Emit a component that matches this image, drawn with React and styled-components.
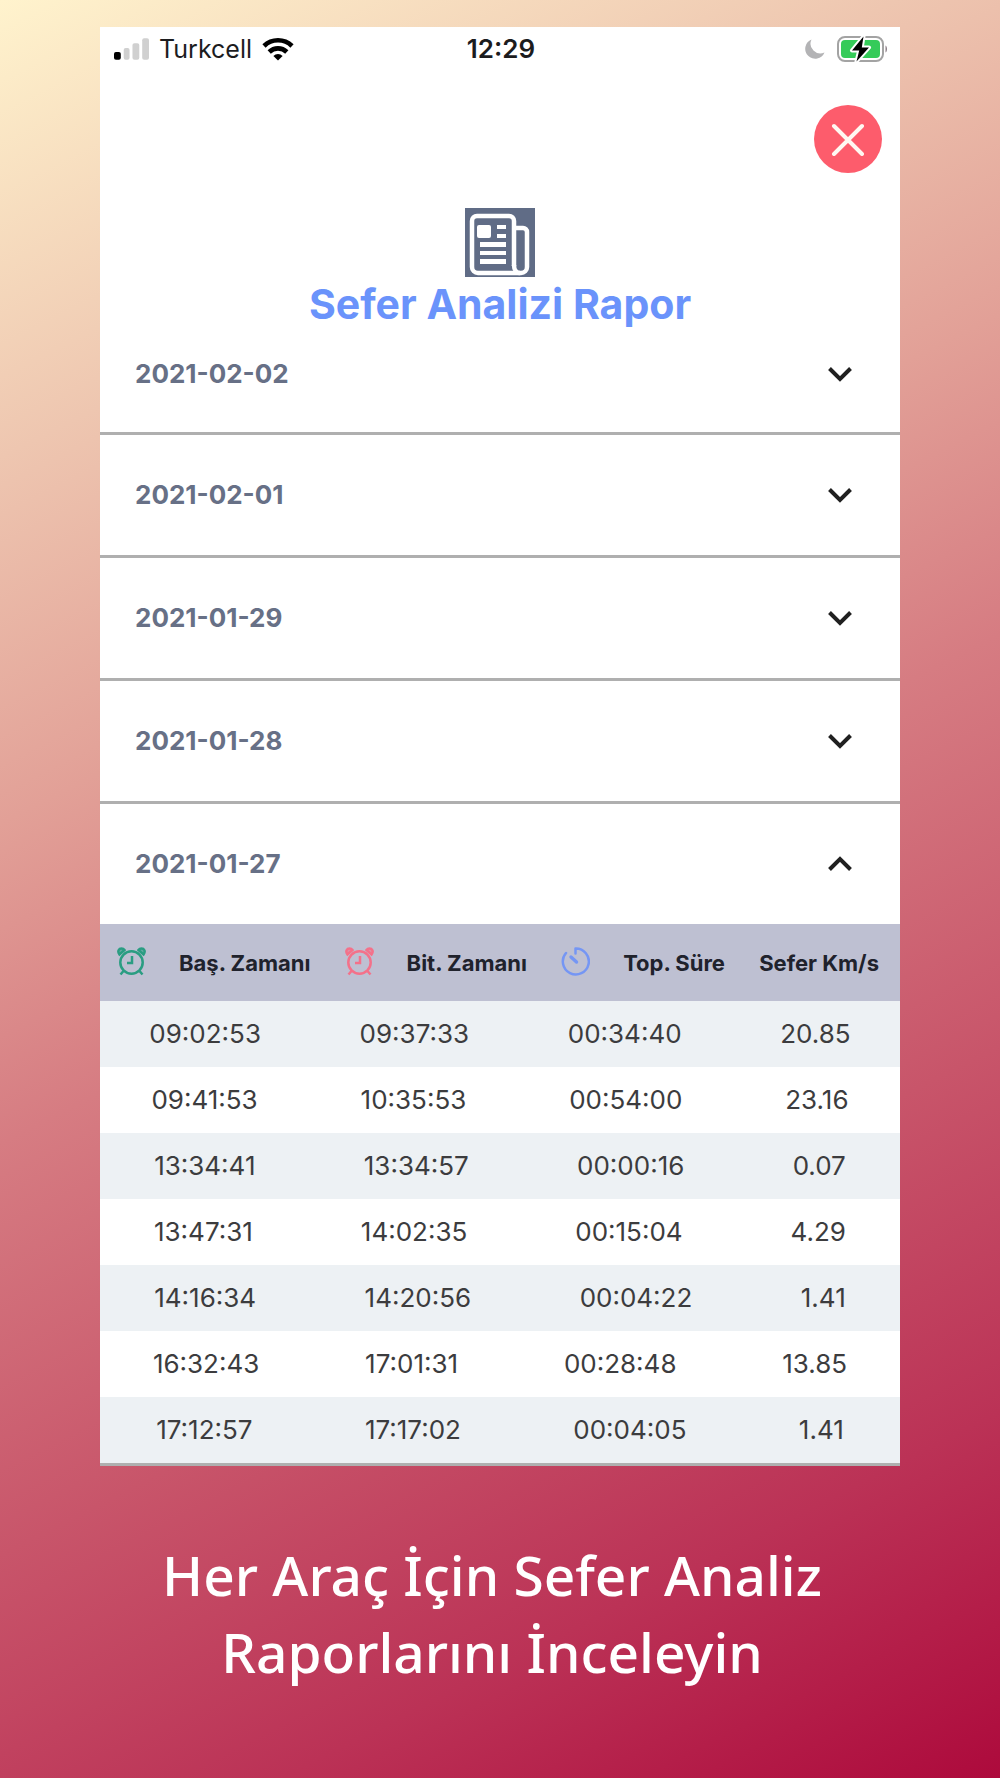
import React, { useState } from "react";
import styled, { createGlobalStyle } from "styled-components";

const GlobalStyle = createGlobalStyle`
  * { box-sizing: border-box; }
  body { margin: 0; font-family: Inter, "Liberation Sans", sans-serif; }
`;

const Page = styled.main`
  min-height: 100vh;
  padding: 27px 10% 0;
  background: linear-gradient(153deg, #fff3cd 0%, #eec6b0 20%, #e2a097 36%, #d67c82 50%, #c8556a 68%, #bb3256 84%, #ad0a3c 100%);
`;

const Screen = styled.section`
  background: #fff;
`;

const StatusBar = styled.header`
  display: grid;
  grid-template-columns: 1fr auto 1fr;
  align-items: center;
  height: 44px;
  padding: 0 12px 0 14px;
  color: #1c1c1e;
  font-size: 25px;
  line-height: 32px;
`;

const StatusGroup = styled.div`
  display: flex;
  align-items: center;
  justify-content: ${(p) => (p.$end ? "flex-end" : "flex-start")};
  gap: ${(p) => (p.$end ? "12px" : "10px")};
`;

const Clock = styled.time`
  font-size: 26px;
  font-weight: 600;
`;

const CloseRow = styled.div`
  display: flex;
  justify-content: flex-end;
  padding: 34px 18px 0;
`;

const CloseButton = styled.button`
  display: grid;
  place-items: center;
  width: 68px;
  height: 68px;
  padding: 0;
  border: 0;
  border-radius: 50%;
  background: #fd5c6c;
  cursor: pointer;
`;

const Heading = styled.div`
  display: flex;
  flex-direction: column;
  align-items: center;
  padding-top: 35px;
`;

const Title = styled.h1`
  margin: 0;
  color: #6a93fb;
  font-size: 41px;
  font-weight: 700;
  line-height: 54px;
`;

const Day = styled.section`
  border-bottom: 3px solid #afafaf;
`;

const DayTitle = styled.h2`
  margin: 0;
`;

const DayButton = styled.button`
  display: flex;
  align-items: center;
  justify-content: space-between;
  width: 100%;
  height: ${(p) => (p.$first ? "101px" : "120px")};
  padding: ${(p) => (p.$first ? "0 47px 16px 35px" : "0 47px 0 35px")};
  border: 0;
  background: none;
  color: #677086;
  font: 700 26px/32px Inter, "Liberation Sans", sans-serif;
  cursor: pointer;
`;

const Trips = styled.table`
  display: block;
  width: 100%;
`;

const TripsHead = styled.thead`
  display: block;
  background: #bec0d2;
`;

const TripsBody = styled.tbody`
  display: block;
`;

const HeadRow = styled.tr`
  display: flex;
  align-items: center;
  justify-content: space-between;
  height: 77px;
  padding: 0 21px 0 17px;
`;

const HeadCell = styled.th`
  display: flex;
  align-items: center;
  gap: 33px;
  padding: 0;
  color: #20222c;
  font-size: 22px;
  font-weight: 700;
  line-height: 28px;
  white-space: nowrap;
`;

const TripRow = styled.tr`
  display: flex;
  align-items: center;
  justify-content: space-around;
  height: 66px;
  &:nth-child(odd) { background: #edf1f4; }
`;

const TripCell = styled.td`
  padding: 0;
  color: #3c3c3e;
  font-size: 26px;
  line-height: 32px;
`;

const Caption = styled.p`
  margin: 0;
  padding: 70px 16px 0 0;
  color: #fff;
  font-family: "Noto Sans", sans-serif;
  font-size: 55px;
  font-weight: 500;
  line-height: 77px;
  text-align: center;
`;

const SignalIcon = () => (
  <svg width="35" height="24" viewBox="0 0 36 24" aria-hidden="true">
    <rect x="0" y="15" width="7" height="8" rx="2" fill="#000" />
    <rect x="10" y="11" width="6" height="12" rx="2" fill="#d0d0d0" />
    <rect x="19" y="6" width="7" height="17" rx="2" fill="#d0d0d0" />
    <rect x="29" y="1" width="7" height="22" rx="2" fill="#d0d0d0" />
  </svg>
);

const WifiIcon = () => (
  <svg width="32" height="24" viewBox="0 0 32 24" aria-hidden="true">
    <g fill="none" stroke="#000" strokeWidth="4.600">
      <path d="M2 9a20 20 0 0 1 28 0" />
      <path d="M7.200 15a12.600 12.600 0 0 1 17.600 0" />
    </g>
    <path d="M16 23.500l-4.600-4.600a6.600 6.600 0 0 1 9.200 0z" fill="#000" />
  </svg>
);

const MoonIcon = () => (
  <svg width="20" height="20" viewBox="0 0 20 20" aria-hidden="true">
    <path d="M6.500.5A10 10 0 1 0 19.500 13.500 9.800 9.800 0 0 1 6.500.5z" fill="#b3b3b5" />
  </svg>
);

const BatteryIcon = () => (
  <svg width="51" height="28" viewBox="0 0 51 28" aria-hidden="true">
    <rect x="1" y="2" width="45" height="24" rx="7" fill="#fff" stroke="#a3a3a3" strokeWidth="2" />
    <rect x="4" y="5" width="39" height="18" rx="4" fill="#35cb59" />
    <path d="M48.500 10.500c2 1 2 6 0 7z" fill="#8d8088" />
    <path d="M26.500 1.500L15 15.500h7.200L19.500 26.500 32 12.500h-7.200z" fill="#000" stroke="#fff" strokeWidth="4" paintOrder="stroke" strokeLinejoin="round" />
  </svg>
);

const CloseIcon = () => (
  <svg width="34" height="34" viewBox="0 0 34 34" aria-hidden="true">
    <path d="M3 4l28 28M31 4L3 32" stroke="#fff8f2" strokeWidth="4" strokeLinecap="round" />
  </svg>
);

const ReportIcon = () => (
  <svg width="70" height="69" viewBox="0 0 70 69" aria-hidden="true">
    <rect width="70" height="69" fill="#606c86" />
    <g fill="none" stroke="#fff" strokeWidth="4.500">
      <path d="M49 58V13a5 5 0 0 0-5-5H12a5 5 0 0 0-5 5v46a6 6 0 0 0 6 6h43a6 6 0 0 0 6-6V24a4 4 0 0 0-4-4h-9" />
      <path d="M49 57c0 5 2.500 8 6 8" />
    </g>
    <rect x="12" y="17" width="14" height="13" rx="2" fill="#fff" />
    <path d="M32 17h9v4h-9zM32 26h9v4h-9zM15 34h26v5H15zM15 43h26v4H15zM15 51h26v5H15z" fill="#fff" />
  </svg>
);

const Chevron = ({ up }) => (
  <svg width="26" height="18" viewBox="0 0 26 18" aria-hidden="true">
    <path d={up ? "M2.500 14.500L13 4l10.500 10.500" : "M2.500 3.500L13 14 23.500 3.500"} fill="none" stroke="#202020" strokeWidth="4" />
  </svg>
);

const AlarmIcon = ({ color }) => (
  <svg width="29" height="32" viewBox="0 0 29 32" fill="none" stroke={color} strokeWidth="2.500" aria-hidden="true">
    <circle cx="14.500" cy="15.500" r="11.200" />
    <path d="M15 9v7h-5M6.500 24L3.500 27.500M22.500 24l3 3.500" />
    <path d="M2.500 7.500C0 4 2 1.500 4.500 1.500c1.500 0 2.500.8 3 1.500zM26.500 7.500C29 4 27 1.500 24.500 1.500c-1.500 0-2.500.8-3 1.500z" fill={color} fillOpacity=".6" />
  </svg>
);

const TimerIcon = () => (
  <svg width="29" height="32" viewBox="0 0 29 32" fill="none" stroke="#7596f4" strokeWidth="2.500" strokeLinecap="round" strokeLinejoin="round" aria-hidden="true">
    <path d="M14.500 6.500V1.500A13 13 0 1 1 5 6" />
    <path d="M10 10l5.500 5" strokeWidth="3.400" />
  </svg>
);

const days = [
  { date: "2021-02-02" },
  { date: "2021-02-01" },
  { date: "2021-01-29" },
  { date: "2021-01-28" },
  {
    date: "2021-01-27",
    trips: [
      ["09:02:53", "09:37:33", "00:34:40", "20.85"],
      ["09:41:53", "10:35:53", "00:54:00", "23.16"],
      ["13:34:41", "13:34:57", "00:00:16", "0.07"],
      ["13:47:31", "14:02:35", "00:15:04", "4.29"],
      ["14:16:34", "14:20:56", "00:04:22", "1.41"],
      ["16:32:43", "17:01:31", "00:28:48", "13.85"],
      ["17:12:57", "17:17:02", "00:04:05", "1.41"],
    ],
  },
];

function TripTable({ trips }) {
  return (
    <Trips>
      <TripsHead>
        <HeadRow>
          <HeadCell scope="col"><AlarmIcon color="#2a9d82" />Baş. Zamanı</HeadCell>
          <HeadCell scope="col"><AlarmIcon color="#f4718a" />Bit. Zamanı</HeadCell>
          <HeadCell scope="col"><TimerIcon />Top. Süre</HeadCell>
          <HeadCell scope="col">Sefer Km/s</HeadCell>
        </HeadRow>
      </TripsHead>
      <TripsBody>
        {trips.map((trip) => (
          <TripRow key={trip[0]}>
            {trip.map((value, i) => <TripCell key={i}>{value}</TripCell>)}
          </TripRow>
        ))}
      </TripsBody>
    </Trips>
  );
}

export default function App() {
  const [openDate, setOpenDate] = useState("2021-01-27");
  return (
    <Page>
      <GlobalStyle />
      <Screen>
        <StatusBar>
          <StatusGroup><SignalIcon />Turkcell<WifiIcon /></StatusGroup>
          <Clock>12:29</Clock>
          <StatusGroup $end><MoonIcon /><BatteryIcon /></StatusGroup>
        </StatusBar>
        <CloseRow>
          <CloseButton type="button" aria-label="Kapat"><CloseIcon /></CloseButton>
        </CloseRow>
        <Heading>
          <ReportIcon />
          <Title>Sefer Analizi Rapor</Title>
        </Heading>
        {days.map(({ date, trips }, i) => {
          const open = openDate === date;
          return (
            <Day key={date}>
              <DayTitle>
                <DayButton
                  type="button"
                  $first={i === 0}
                  aria-expanded={open}
                  onClick={() => setOpenDate(open ? null : date)}
                >
                  {date}
                  <Chevron up={open} />
                </DayButton>
              </DayTitle>
              {open && trips && <TripTable trips={trips} />}
            </Day>
          );
        })}
      </Screen>
      <Caption>Her Araç İçin Sefer Analiz Raporlarını İnceleyin</Caption>
    </Page>
  );
}
